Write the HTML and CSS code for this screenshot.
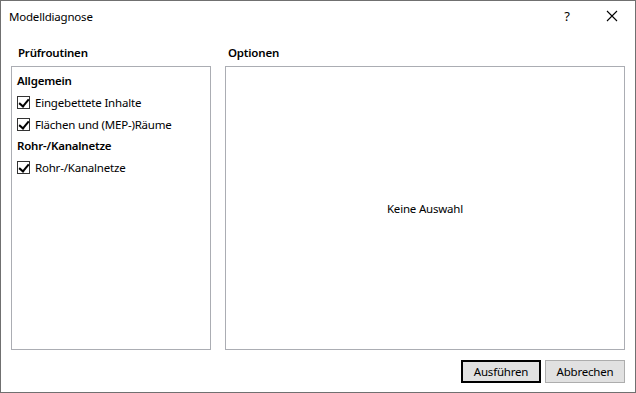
FILE: index.html
```html
<!DOCTYPE html>
<html lang="de">
<head>
    <meta charset="UTF-8">
    <title>Modelldiagnose</title>
    <link rel="stylesheet" href="styles.css">
</head>
<body>
    <div class="dialog">
        <div class="titlebar">
            <span class="title">Modelldiagnose</span>
            <span class="help">?</span>
            <span class="close">
                <svg width="12" height="12" viewBox="0 0 12 12"><path d="M1 1L11 11M11 1L1 11" stroke="#000" stroke-width="1.1" fill="none"/></svg>
            </span>
        </div>
        <div class="content">
            <div class="panels">
                <div class="panel left">
                    <h3>Prüfroutinen</h3>
                    <div class="box list">
                        <div class="group">Allgemein</div>
                        <label class="item"><span class="check"></span>Eingebettete Inhalte</label>
                        <label class="item"><span class="check"></span>Flächen und (MEP-)Räume</label>
                        <div class="group">Rohr-/Kanalnetze</div>
                        <label class="item"><span class="check"></span>Rohr-/Kanalnetze</label>
                    </div>
                </div>
                <div class="panel right">
                    <h3>Optionen</h3>
                    <div class="box options">Keine Auswahl</div>
                </div>
            </div>
            <div class="buttons">
                <button class="btn default">Ausführen</button>
                <button class="btn">Abbrechen</button>
            </div>
        </div>
    </div>
</body>
</html>
```

FILE: styles.css
```css
* {
    box-sizing: border-box;
    margin: 0;
    padding: 0;
}

body {
    font-family: "Noto Sans", "Open Sans", sans-serif;
    font-size: 11.5px;
    letter-spacing: -0.2px;
    color: #000;
    background: #fff;
}

.dialog {
    width: 636px;
    height: 393px;
    border: 1px solid #707070;
    display: flex;
    flex-direction: column;
}

.titlebar {
    height: 30px;
    display: flex;
    align-items: center;
    padding-left: 8px;
}

.title {
    flex: 1;
}

.help {
    width: 46px;
    text-align: center;
    font-size: 13px;
    padding-left: 2px;
}

.close {
    width: 46px;
    display: flex;
    justify-content: center;
}

.content {
    flex: 1;
    display: flex;
    flex-direction: column;
    padding: 14px 10px 9px 10px;
}

.panels {
    flex: 1;
    display: flex;
    gap: 14px;
}

.panel {
    display: flex;
    flex-direction: column;
}

.panel.left {
    width: 200px;
}

.panel.right {
    flex: 1;
}

.panel h3 {
    font-size: 11.5px;
    font-weight: 600;
    height: 21px;
    padding-left: 7px;
}

.panel.right h3 {
    padding-left: 3px;
}

.box {
    flex: 1;
    border: 1px solid #abadb3;
}

.list {
    padding: 3px 5px;
}

.group {
    font-weight: 600;
    height: 21px;
    line-height: 21px;
}

.item {
    display: flex;
    align-items: center;
    height: 22px;
}

.check {
    width: 13px;
    height: 13px;
    border: 1px solid #333;
    margin-right: 5px;
    position: relative;
}

.check::after {
    content: "";
    position: absolute;
    left: 3px;
    top: 0px;
    width: 4px;
    height: 8px;
    border-right: 2px solid #000;
    border-bottom: 2px solid #000;
    transform: rotate(40deg);
}

.options {
    display: flex;
    align-items: center;
    justify-content: center;
}

.buttons {
    display: flex;
    justify-content: flex-end;
    gap: 4px;
    padding-top: 10px;
}

.btn {
    font-family: inherit;
    font-size: 11.5px;
    letter-spacing: -0.2px;
    width: 80px;
    height: 23px;
    background: #e1e1e1;
    border: 1px solid #adadad;
    color: #000;
}

.btn.default {
    border: 2px solid #000;
}
```
